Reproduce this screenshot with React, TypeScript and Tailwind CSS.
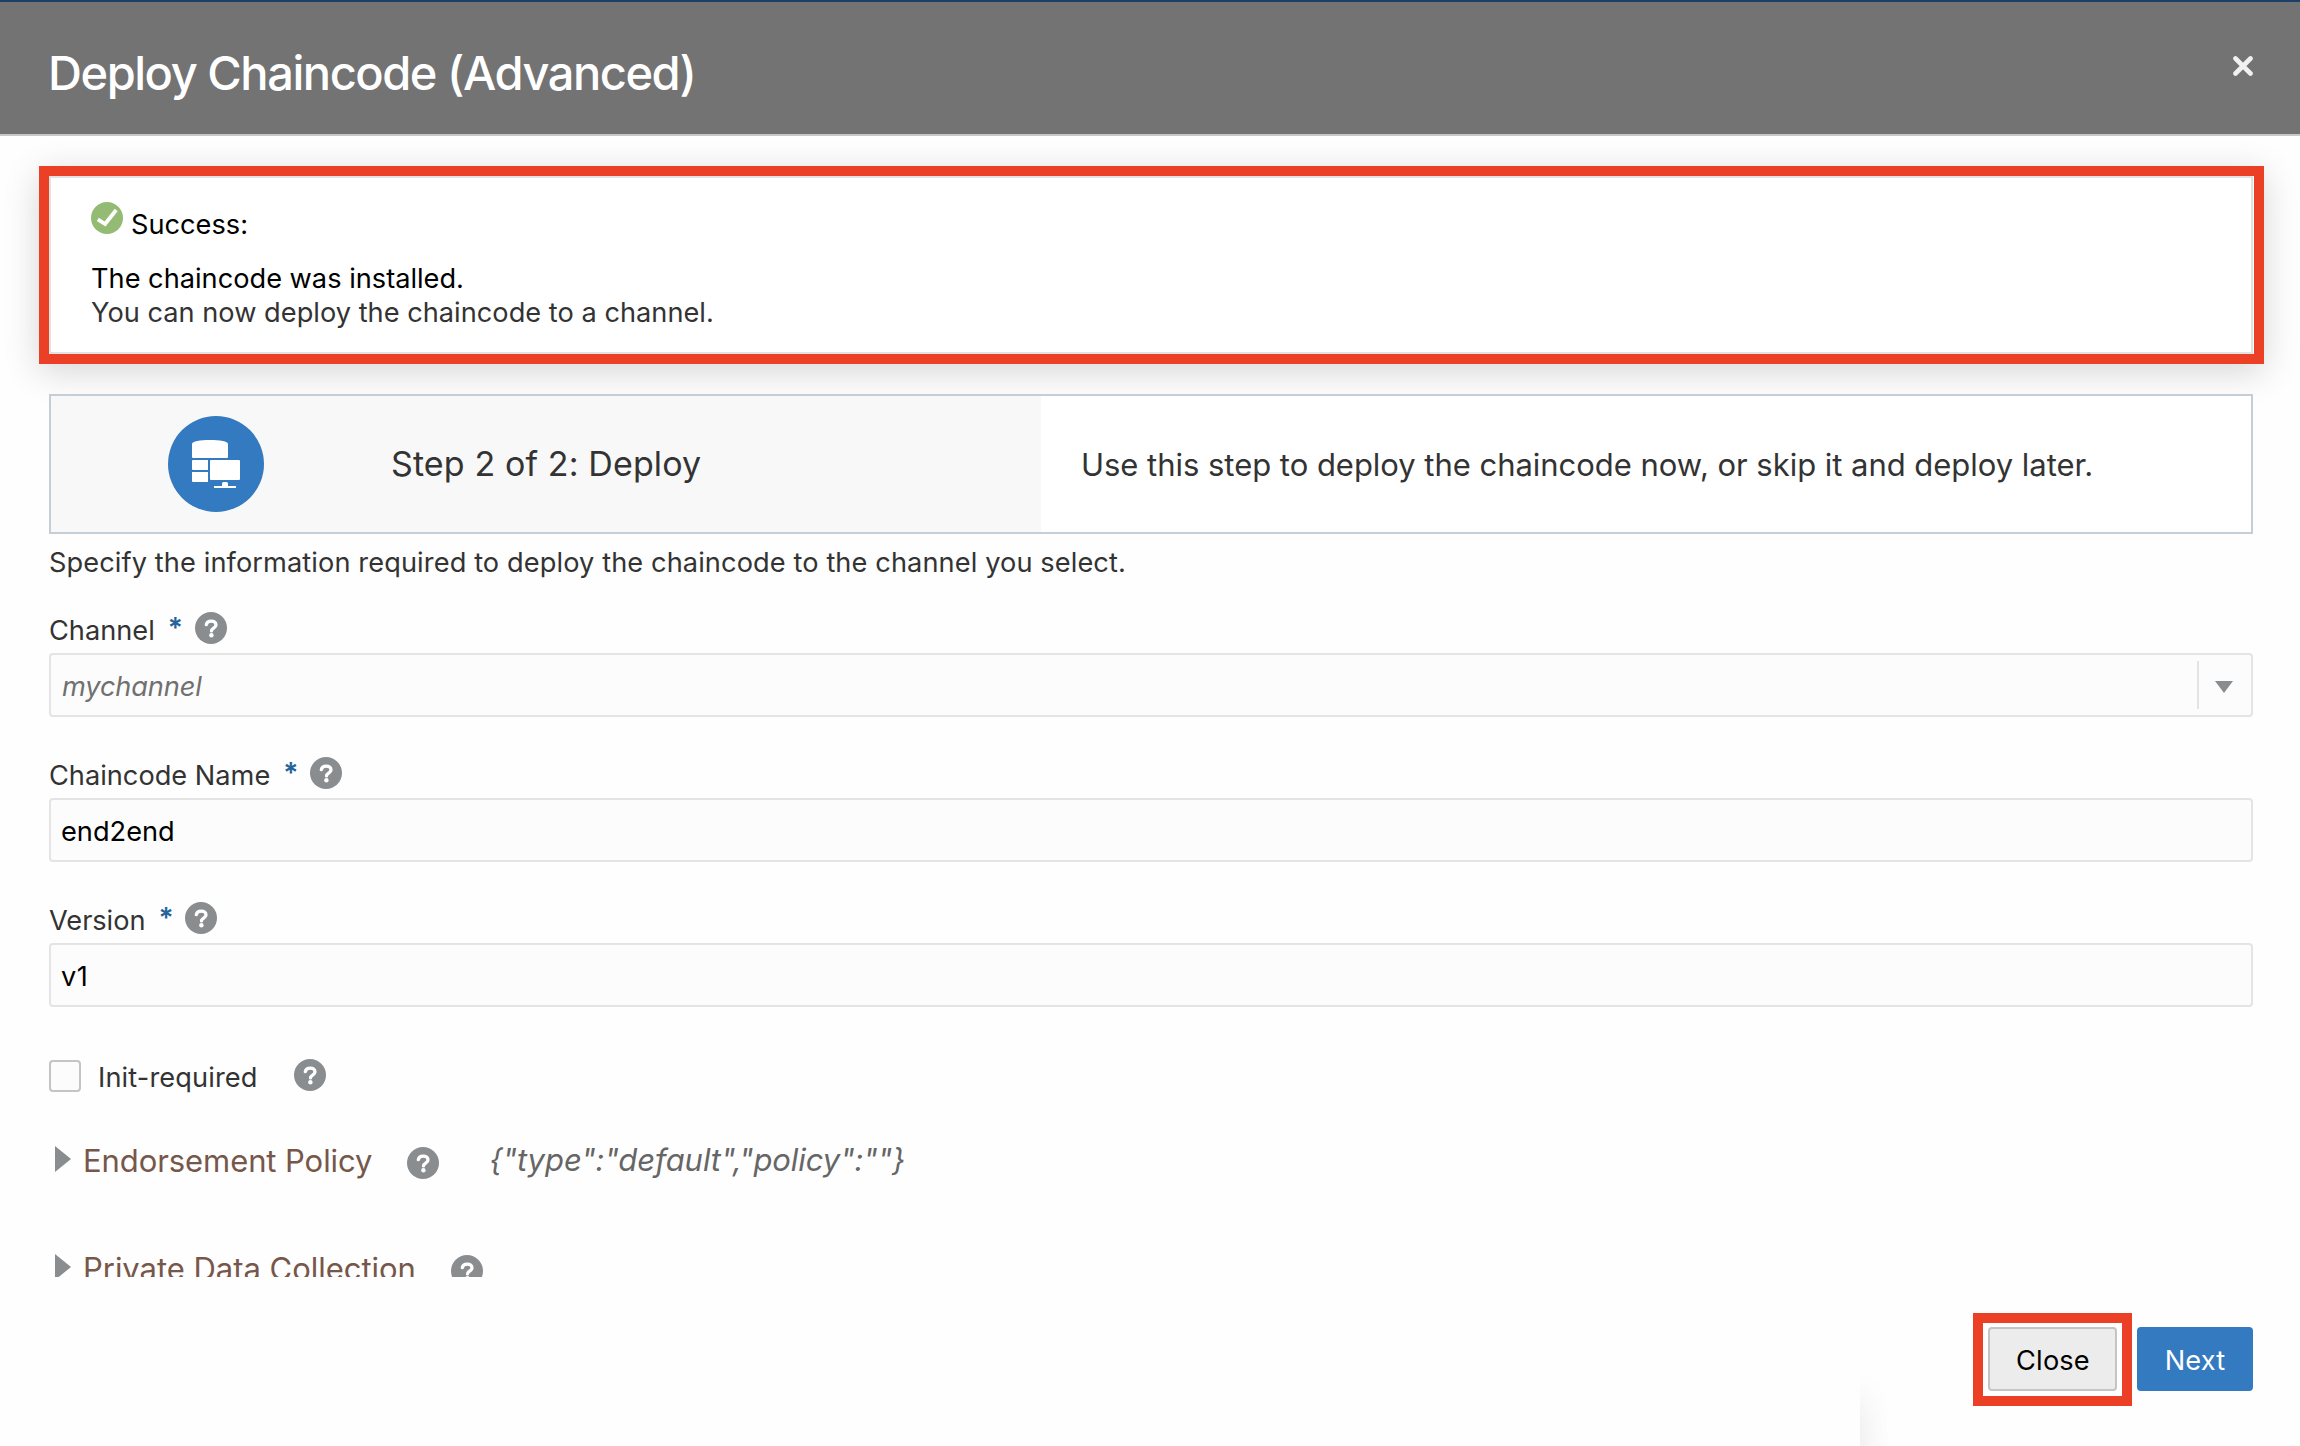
import type { ReactNode } from "react";

function HelpIcon() {
  return (
    <svg className="size-8 shrink-0" viewBox="0 0 32 32" fill="none" aria-label="Help">
      <circle cx="16" cy="16" r="16" fill="#8a8d8f" />
      <path
        d="M11.3 12.7C11.7 10.4 13.6 9.1 16.2 9.1c2.8 0 4.8 1.5 4.8 3.9 0 3-4.5 3.2-4.5 5.9"
        stroke="#fff"
        strokeWidth="3.3"
        strokeLinecap="round"
      />
      <circle cx="16.4" cy="23.2" r="2.2" fill="#fff" />
    </svg>
  );
}

function SuccessIcon() {
  return (
    <svg className="size-8 shrink-0" viewBox="0 0 32 32" fill="none">
      <circle cx="16" cy="16" r="16" fill="#94bb74" />
      <path d="M6.8 17.4 14.1 22 25.2 8" stroke="#fff" strokeWidth="3.8" />
    </svg>
  );
}

function DeployIcon() {
  return (
    <svg className="size-24 shrink-0" viewBox="0 0 96 96">
      <circle cx="48" cy="48" r="48" fill="#337ac0" />
      <g fill="#fff">
        <path d="M24 28c0-2.600 8-4 18-4s18 1.400 18 4v13a1 1 0 0 1-1 1H25a1 1 0 0 1-1-1z" />
        <path d="M25 44h15v10H25a1 1 0 0 1-1-1v-8a1 1 0 0 1 1-1z" />
        <path d="M24 56h16v10H25a1 1 0 0 1-1-1z" />
        <rect x="42" y="44" width="30" height="20" rx="1" />
        <path d="M54 70v-2.500q0-1.500 1.500-1.500h3q1.500 0 1.500 1.500V70h8v2H46v-2z" />
      </g>
    </svg>
  );
}

function Field({ label, children }: { label: ReactNode; children: ReactNode }) {
  return (
    <div className="mb-10">
      <div className="flex h-8 items-center">
        <span className="pt-[6px] text-[27.2px] leading-[34px] text-[#333333]">{label}</span>
        <span className="-mt-px ml-[13px] w-4 text-[28px] leading-[34px] font-semibold text-[#25639a]">*</span>
        <div className="ml-[11px]">
          <HelpIcon />
        </div>
      </div>
      <div className="mt-[9px] flex h-16 items-center rounded-[4px] border-2 border-[#e4e4e4] bg-[#fcfcfc] pl-[10px] text-[27.2px] leading-[34px] text-black">
        {children}
      </div>
    </div>
  );
}

function Disclosure({ title, children }: { title: ReactNode; children?: ReactNode }) {
  return (
    <div className="mb-[68px] flex h-10 items-center pl-[6px]">
      <svg className="mb-[2px] h-[26px] w-4 shrink-0" viewBox="0 0 16 26">
        <path d="M0 0 16 13 0 26z" fill="#8a8d8f" />
      </svg>
      <span className="ml-3 pt-px text-[31px] leading-10 text-[#76574a]">{title}</span>
      <div className="ml-[35px] pt-[6px]">
        <HelpIcon />
      </div>
      {children}
    </div>
  );
}

export default function App() {
  return (
    <div className="relative flex h-[1446px] w-[2300px] flex-col overflow-hidden bg-[#fefefe] font-['Inter',sans-serif]">
      <header className="relative z-10 flex h-[136px] shrink-0 items-start justify-between border-t-2 border-b-2 border-t-[#1b3f66] border-b-[#c8c8c8] bg-[#737373] pr-[47px] pl-[48px]">
        <h1 className="mt-[41px] text-[47px] leading-[60px] font-medium tracking-[-1.45px] text-white">
          Deploy Chaincode (Advanced)
        </h1>
        <svg className="mt-[54px] size-5" viewBox="0 0 20 20" fill="none">
          <path d="M2.500 2.500l15 15m0-15l-15 15" stroke="#f1f1f1" strokeWidth="4.600" strokeLinecap="round" />
        </svg>
      </header>

      <main className="h-[1141px] shrink-0 overflow-hidden pt-[30px] pr-[47px] pl-[49px]">
        <section className="-mr-[11px] -ml-[10px] h-[198px] border-[10px] border-[#ec4026] bg-white pr-px shadow-[0_8px_34px_0_rgba(0,0,0,0.16)]">
          <div className="h-full border-2 border-[#e0e2e3] pt-6 pl-10 text-[27.2px] leading-[34px] text-black">
            <div className="flex items-start">
              <SuccessIcon />
              <span className="mt-[6px] ml-2">Success:</span>
            </div>
            <p className="mt-5">The chaincode was installed.</p>
            <p className="tracking-[0.015px] text-[#333333]">You can now deploy the chaincode to a channel.</p>
          </div>
        </section>

        <section className="mt-[30px] flex h-[140px] border-2 border-[#c4ced7] text-[#333333]">
          <div className="flex w-[990px] items-center bg-[#f8f8f8] pl-[117px]">
            <DeployIcon />
            <h2 className="ml-[127px] text-[34px] leading-10 tracking-[0.12px]">Step 2 of 2: Deploy</h2>
          </div>
          <p className="flex flex-1 items-center bg-white pt-[2px] pl-[40px] text-[31px] leading-10 tracking-[-0.03px]">
            Use this step to deploy the chaincode now, or skip it and deploy later.
          </p>
        </section>

        <p className="mt-3 mb-8 text-[27.2px] leading-[34px] tracking-[0.1px] text-[#333333]">
          Specify the information required to deploy the chaincode to the channel you select.
        </p>

        <Field label="Channel">
          <span className="pt-[3px] pl-px tracking-[-0.14px] text-[#707070] italic">mychannel</span>
          <div className="ml-auto flex h-12 w-[54px] items-center border-l-2 border-[#e4e4e4] pt-[3px] pl-4">
            <svg className="h-3 w-[18px]" viewBox="0 0 18 12">
              <path d="M0 0h18L9 12z" fill="#8a8d8f" />
            </svg>
          </div>
        </Field>
        <Field label="Chaincode Name">
          <span className="pt-[3px]">end2end</span>
        </Field>
        <Field label={<span className="tracking-[-0.05px]">Version</span>}>
          <span className="pt-[3px] tracking-[0.5px]">v1</span>
        </Field>

        <div className="mt-[52px] mb-12 flex h-[33px] items-center">
          <div className="mt-px size-8 rounded-[4px] border-2 border-[#c4c4c4] bg-[#fcfcfc]" />
          <span className="mt-[5px] ml-[17px] text-[27.2px] leading-[34px] tracking-[0.12px] text-[#333333]">
            Init-required
          </span>
          <div className="mb-px ml-[36px]">
            <HelpIcon />
          </div>
        </div>

        <Disclosure title={<span className="tracking-[-0.08px]">Endorsement Policy</span>}>
          <span className="ml-[50px] text-[31px] leading-10 tracking-[-0.07px] text-[#666666] italic">
            {'{"type":"default","policy":""}'}
          </span>
        </Disclosure>
        <Disclosure title={<span className="tracking-[-0.03px]">Private Data Collection</span>} />
      </main>

      <footer className="flex flex-1 items-start justify-end pt-9 pr-[47px]">
        <div className="h-[93px] w-[159px] border-[10px] border-[#ec4026] pt-1 pl-[5px]">
          <button className="h-16 w-[129px] rounded-[4px] border-2 border-[#c4c4c4] bg-[#ececec] pt-[3px] pl-px text-[27.2px] leading-[57px] tracking-[0.17px] text-black">
            Close
          </button>
        </div>
        <button className="mt-[14px] ml-[5px] h-16 w-[116px] rounded-[4px] bg-[#337ac0] pt-[3px] text-[27.2px] leading-[61px] tracking-[0.13px] text-white">
          Next
        </button>
      </footer>

      <div className="pointer-events-none absolute bottom-0 left-[1860px] h-[96px] w-[27px] overflow-hidden">
        <div className="absolute top-[50px] right-[27px] h-[200px] w-[200px] shadow-[0_0_36px_0_rgba(0,0,0,0.1)]" />
      </div>
    </div>
  );
}
